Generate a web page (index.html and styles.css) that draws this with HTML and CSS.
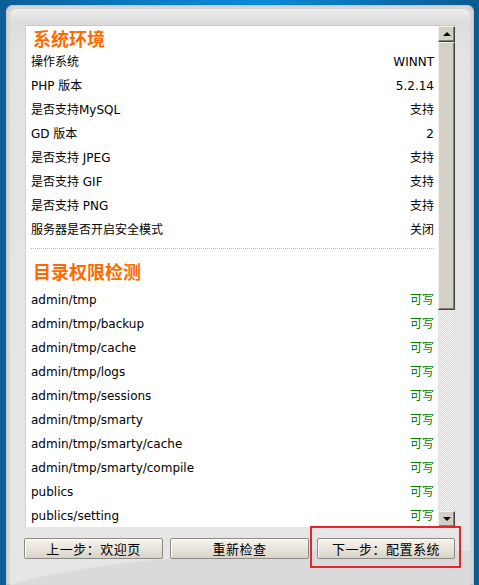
FILE: index.html
```html
<!DOCTYPE html>
<html lang="zh-CN">
<head>
    <meta charset="UTF-8">
    <title>安装向导 - 检查环境</title>
    <link rel="stylesheet" href="styles.css">
</head>
<body>
    <div class="window">
        <div class="frame">
            <div class="panel">
                <div class="list">
                    <h2 class="title">系统环境</h2>
                    <div class="row"><span>操作系统</span><span>WINNT</span></div>
                    <div class="row"><span>PHP 版本</span><span>5.2.14</span></div>
                    <div class="row"><span>是否支持MySQL</span><span>支持</span></div>
                    <div class="row"><span>GD 版本</span><span>2</span></div>
                    <div class="row"><span>是否支持 JPEG</span><span>支持</span></div>
                    <div class="row"><span>是否支持 GIF</span><span>支持</span></div>
                    <div class="row"><span>是否支持 PNG</span><span>支持</span></div>
                    <div class="row"><span>服务器是否开启安全模式</span><span>关闭</span></div>
                    <div class="sep"></div>
                    <h2 class="title">目录权限检测</h2>
                    <div class="dirs">
                        <div class="row"><span>admin/tmp</span><span class="ok">可写</span></div>
                        <div class="row"><span>admin/tmp/backup</span><span class="ok">可写</span></div>
                        <div class="row"><span>admin/tmp/cache</span><span class="ok">可写</span></div>
                        <div class="row"><span>admin/tmp/logs</span><span class="ok">可写</span></div>
                        <div class="row"><span>admin/tmp/sessions</span><span class="ok">可写</span></div>
                        <div class="row"><span>admin/tmp/smarty</span><span class="ok">可写</span></div>
                        <div class="row"><span>admin/tmp/smarty/cache</span><span class="ok">可写</span></div>
                        <div class="row"><span>admin/tmp/smarty/compile</span><span class="ok">可写</span></div>
                        <div class="row"><span>publics</span><span class="ok">可写</span></div>
                        <div class="row"><span>publics/setting</span><span class="ok">可写</span></div>
                        <div class="row"><span>publics/upload</span><span class="ok">可写</span></div>
                    </div>
                </div>
                <div class="scrollbar">
                    <div class="sb-btn"><span class="arrow up"></span></div>
                    <div class="sb-thumb"></div>
                    <div class="sb-track"></div>
                    <div class="sb-btn"><span class="arrow down"></span></div>
                </div>
            </div>
            <div class="actions">
                <div class="btn"><span class="label">上一步：欢迎页</span></div>
                <div class="btn"><span class="label">重新检查</span></div>
                <div class="btn"><span class="label">下一步：配置系统</span></div>
                <div class="mark"></div>
            </div>
        </div>
    </div>
</body>
</html>
```

FILE: styles.css
```css
body {
    margin: 0;
    height: 585px;
    overflow: hidden;
    background: linear-gradient(90deg, #0d5e96 0%, #0a7cc4 30%, #0a8ad6 55%, #0a6aa8 85%, #0b5a90 100%);
    font-family: "DejaVu Sans", "Noto Sans CJK SC", sans-serif;
    font-size: 12px;
}

.window {
    margin: 5px 5px 0 6px;
    height: 580px;
    border-radius: 7px 7px 0 0;
    background: #d6d6d6;
    box-shadow: inset 0 0 0 1px #c4c4c4;
    padding: 4px 0 0 0;
    box-sizing: border-box;
}

.frame {
    margin: 0 4px;
    height: 576px;
    border-radius: 6px 6px 0 0;
    background:
        radial-gradient(ellipse 420px 60px at 380px 600px, #dadada 0 98%, transparent 100%),
        linear-gradient(#eeeeee 0, #dcdcdc 14px, #e3e3e3 40px, #e6e6e6 100%);
    padding: 16px 0 0 15px;
    box-sizing: border-box;
}

.panel {
    display: flex;
    width: 430px;
    height: 502px;
    background: #fff;
    border-top: 1px solid #c6c6c6;
    border-left: 1px solid #d0d0d0;
    box-sizing: border-box;
    overflow: hidden;
}

.list {
    flex: 1;
    padding: 0 4px 0 5px;
    overflow: hidden;
}

.title {
    margin: 0;
    height: 24px;
    line-height: 24px;
    font-size: 18px;
    font-weight: bold;
    color: #ff6a00;
    padding-left: 2px;
    font-family: "Noto Sans CJK SC", sans-serif;
}

.row {
    display: flex;
    justify-content: space-between;
    height: 24px;
    line-height: 24px;
    color: #000;
}

.sep {
    margin: 6px 0 10px;
    border-top: 1px dotted #b4b4b4;
}

.dirs {
    margin-top: 5px;
}

.ok {
    color: #008000;
}

.scrollbar {
    width: 17px;
    display: flex;
    flex-direction: column;
    background: repeating-conic-gradient(#d4d0c8 0 25%, #fff 0 50%) 0 0 / 2px 2px;
}

.sb-btn,
.sb-thumb {
    background: #d4d0c8;
    border: 1px solid;
    border-color: #f4f2ee #404040 #404040 #f4f2ee;
    box-shadow: inset -1px -1px 0 #808080;
    box-sizing: border-box;
}

.sb-btn {
    height: 16px;
    display: flex;
    align-items: center;
    justify-content: center;
}

.sb-thumb {
    height: 268px;
}

.sb-track {
    flex: 1;
}

.arrow {
    width: 0;
    height: 0;
    border-left: 4px solid transparent;
    border-right: 4px solid transparent;
}

.arrow.up {
    border-bottom: 4px solid #000;
}

.arrow.down {
    border-top: 4px solid #000;
}

.actions {
    position: relative;
    display: grid;
    grid-template-columns: repeat(3, 139px);
    gap: 7px;
    margin-top: 11px;
    width: 431px;
    margin-left: -1px;
}

.actions .btn:nth-child(3) {
    margin-left: 1px;
}

.btn {
    display: flex;
    align-items: center;
    justify-content: center;
    height: 21px;
    border: 1px solid #8c8a86;
    border-radius: 2px;
    background: linear-gradient(#f6f4ef, #e6e1d8 60%, #d9d3c8);
    box-shadow: inset 1px 1px 0 #fff;
    box-sizing: border-box;
    cursor: pointer;
}

.label {
    font-family: "Noto Sans CJK SC", sans-serif;
    font-size: 13px;
    letter-spacing: 0.5px;
    color: #000;
    line-height: 19px;
    white-space: nowrap;
}

/* 标注下一步按钮 */
.mark {
    position: absolute;
    left: 286px;
    top: -12px;
    width: 151px;
    height: 42px;
    border: 2px solid #e3262c;
    box-sizing: border-box;
    pointer-events: none;
}
```
